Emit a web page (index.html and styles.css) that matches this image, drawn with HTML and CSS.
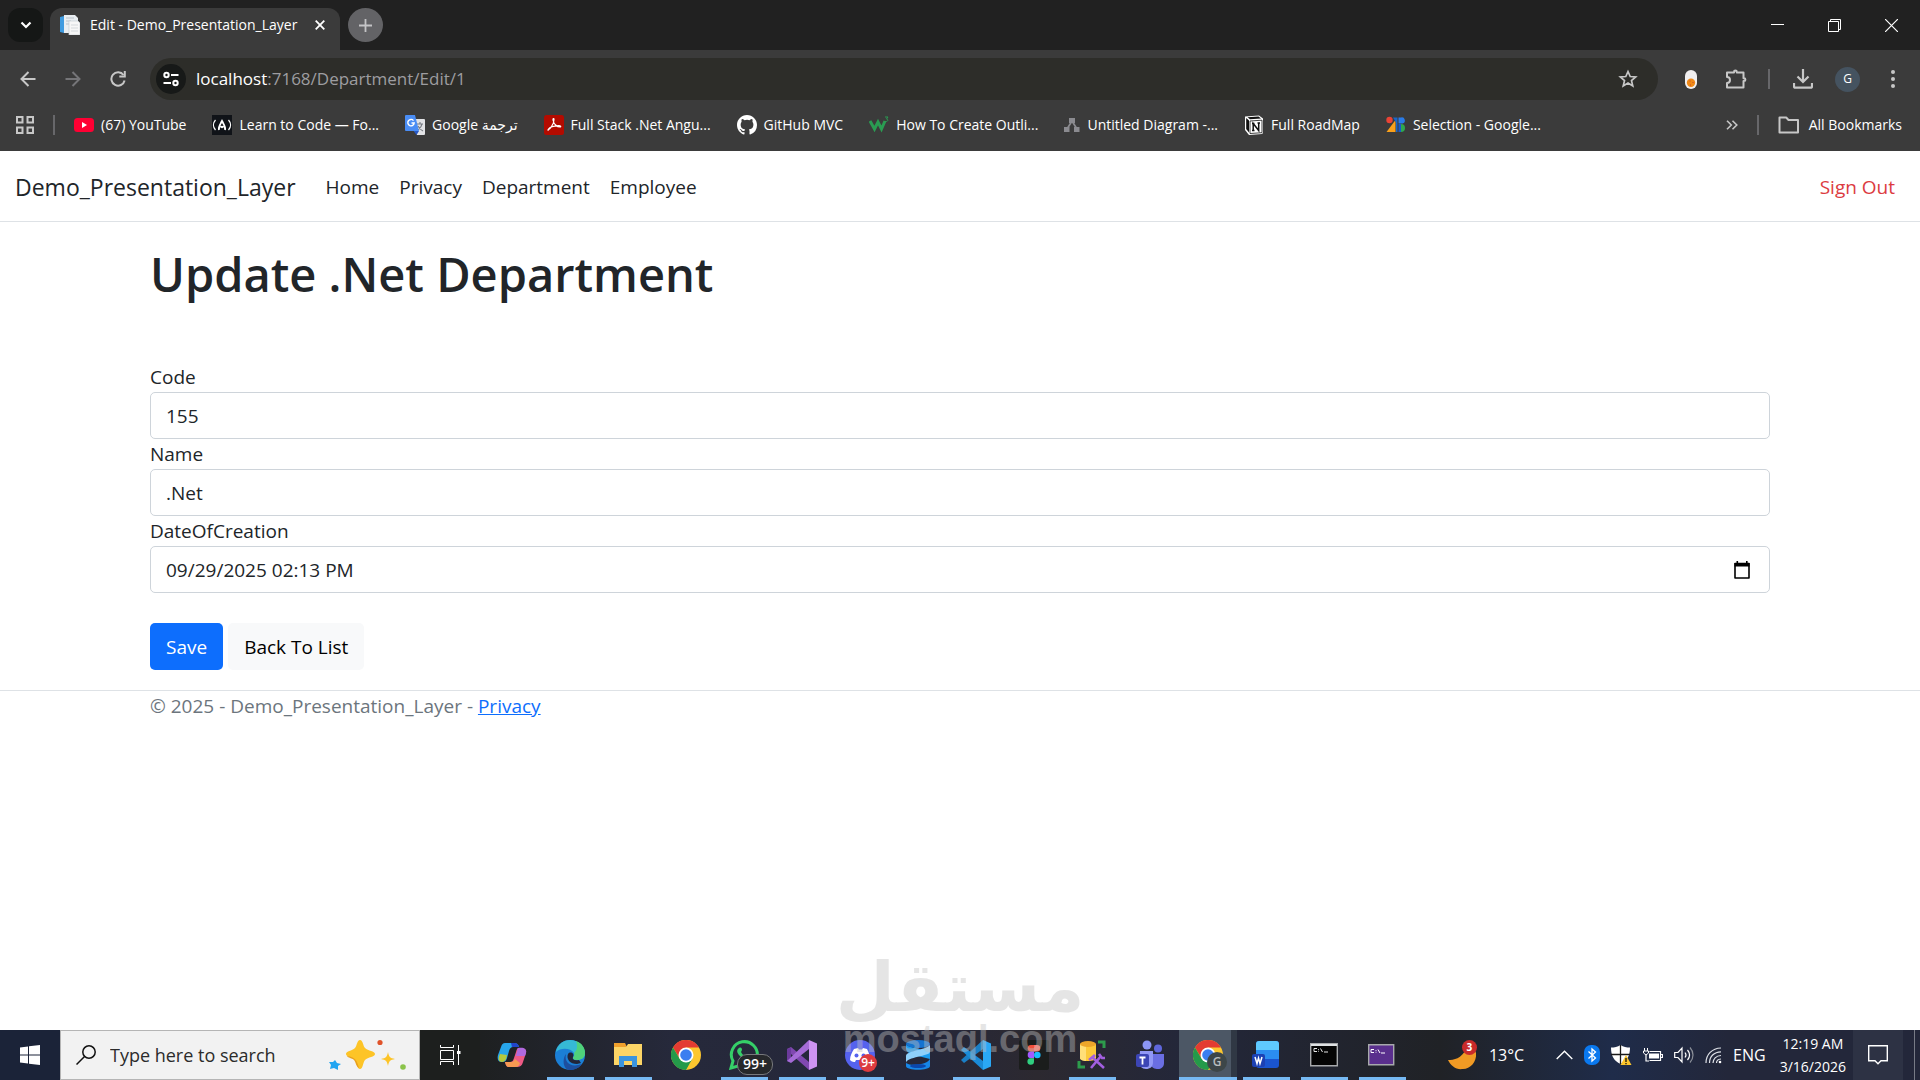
FILE: index.html
```html
<!DOCTYPE html>
<html lang="en">
<head>
  <meta charset="UTF-8" />
  <meta name="viewport" content="width=device-width, initial-scale=1.0" />
  <title>Edit - Demo_Presentation_Layer</title>
  <link rel="stylesheet" href="styles.css">
</head>
<body>
  <!-- Tab strip -->
  <div class="tab-strip">
    <button class="tab-search" aria-label="Search tabs">
      <svg width="12" height="8" viewBox="0 0 12 8"><path d="M1.5 1.5L6 6l4.500-4.500" fill="none" stroke="#fff" stroke-width="2.200"/></svg>
    </button>
    <div class="tab">
      <svg width="20" height="20" viewBox="0 0 20 20"><path d="M0 2l4-1v17l-4-1z" fill="#3f9be0"/><path d="M4 0h11l3 3v15H4z" fill="#e9eef2"/><path d="M6 3h8M6 6h5M6 9h4" stroke="#b9c2ca"/><path d="M9 6h9l2 2v12H9z" fill="#f7f7f7" stroke="#c6cdd2" stroke-width=".7"/><path d="M11 10h7M11 13h7M11 16h7" stroke="#d5d9dc"/></svg>
      <span class="tab-title">Edit - Demo_Presentation_Layer</span>
      <button class="tab-close" aria-label="Close tab">
        <svg width="10" height="10" viewBox="0 0 10 10"><path d="M.7.7l8.600 8.600M9.300.7L.7 9.300" stroke="#fff" stroke-width="1.800"/></svg>
      </button>
    </div>
    <button class="new-tab" aria-label="New tab">
      <svg width="13" height="13" viewBox="0 0 13 13"><path d="M6.500 0v13M0 6.500h13" stroke="#c4c4c6" stroke-width="1.800"/></svg>
    </button>
    <div class="window-buttons">
      <button aria-label="Minimize"><svg width="13" height="13" viewBox="0 0 13 13"><path d="M0 5.500h13" stroke="#fff"/></svg></button>
      <button aria-label="Restore"><svg width="13" height="13" viewBox="0 0 13 13"><path d="M.5 2.500h10v10H.5zM2.500 2.500v-2h10v10h-2" fill="none" stroke="#fff"/></svg></button>
      <button aria-label="Close"><svg width="13" height="13" viewBox="0 0 13 13"><path d="M0 0l13 13M13 0L0 13" stroke="#fff" stroke-width="1.200"/></svg></button>
    </div>
  </div>

  <!-- Toolbar and bookmarks -->
  <div class="browser-bar">
    <div class="toolbar">
      <button class="tool" aria-label="Back"><svg width="16" height="16" viewBox="0 0 16 16"><path d="M15.500 8H2M8.500 1L1.500 8l7 7" fill="none" stroke="#c7c7c7" stroke-width="2"/></svg></button>
      <button class="tool" aria-label="Forward"><svg width="16" height="16" viewBox="0 0 16 16"><path d="M.5 8H14M7.500 1l7 7-7 7" fill="none" stroke="#757578" stroke-width="2"/></svg></button>
      <button class="tool" aria-label="Reload"><svg width="16" height="16" viewBox="0 0 16 16"><path d="M13.500 4A6.700 6.700 0 1 0 14.600 9.500" fill="none" stroke="#c7c7c7" stroke-width="2"/><path d="M15.800 0v6.500H9.300v-2h4.500V0z" fill="#c7c7c7"/></svg></button>
      <div class="omnibox">
        <button class="site-info" aria-label="Site information">
          <svg width="16" height="16" viewBox="0 0 16 16" fill="none" stroke="#fff" stroke-width="2"><circle cx="3.500" cy="4" r="2.200"/><path d="M8 4h7.500M.5 12H8"/><circle cx="12.500" cy="12" r="2.200"/></svg>
        </button>
        <div class="url"><span class="host">localhost</span>:7168/Department/Edit/1</div>
        <button class="star" aria-label="Bookmark this tab"><svg width="20" height="20" viewBox="0 0 20 20"><path d="M10 2.500l2.200 5 5.500.5-4.200 3.600 1.300 5.400L10 14.100 5.200 17l1.300-5.400L2.300 8l5.500-.5z" fill="none" stroke="#c7c7c7" stroke-width="1.700"/></svg></button>
      </div>
      <button class="tool" aria-label="Extension"><svg width="12" height="19" viewBox="0 0 12 19"><rect width="12" height="19" rx="6" fill="#f1eff0"/><circle cx="6" cy="12.800" r="4.200" fill="#f08a18"/><path d="M5 10.500v1M8 12v1M5.500 14.500v1" stroke="#c6452c"/></svg></button>
      <button class="tool" aria-label="Extensions"><svg width="22" height="22" viewBox="0 0 22 22"><path d="M2 4.500h7v-.6a1.400 1.400 0 0 1 2.800 0v.6h6.700v5.800h.5a1.400 1.400 0 0 1 0 2.800h-.5v6.400H2V15a3 3 0 0 0 0-6z" fill="none" stroke="#c7c7c7" stroke-width="2" stroke-linejoin="round"/></svg></button>
      <span class="divider"></span>
      <button class="tool" aria-label="Downloads"><svg width="20" height="20" viewBox="0 0 20 20"><path d="M10 0v12M4.500 7.500l5.500 5.500 5.500-5.500M1 14v3.500a1.200 1.200 0 0 0 1.200 1.200h15.600A1.200 1.200 0 0 0 19 17.500V14" fill="none" stroke="#c7c7c7" stroke-width="2.200"/></svg></button>
      <button class="profile" aria-label="Profile">G</button>
      <button class="tool" aria-label="Menu"><svg width="4" height="18" viewBox="0 0 4 18" fill="#c7c7c7"><circle cx="2" cy="2" r="2"/><circle cx="2" cy="9" r="2"/><circle cx="2" cy="16" r="2"/></svg></button>
    </div>

    <div class="bookmarks">
      <button class="apps" aria-label="Apps"><svg width="18" height="18" viewBox="0 0 18 18"><path d="M1 1h5.500v5.500H1zM11.500 1H17v5.500h-5.500zM1 11.500h5.500V17H1zM11.500 11.500H17V17h-5.500z" fill="none" stroke="#c7c7c7" stroke-width="2"/></svg></button>
      <span class="divider"></span>
      <a href="#"><svg width="20" height="20" viewBox="0 0 20 20"><rect y="3" width="20" height="14" rx="3.500" fill="#f03"/><path d="M8 7l5 3-5 3z" fill="#fff"/></svg>(67) YouTube</a>
      <a href="#"><svg width="20" height="20" viewBox="0 0 20 20"><path d="M0 0h20v20H0z" fill="#101318"/><path d="M3.500 5C.8 8 .8 12 3.500 15M16.500 5c2.700 3 2.700 7 0 10" fill="none" stroke="#fff" stroke-width="1.300"/><path d="M7 15c-1-3 1-5 3-9 2 4 4 6 3 9M8.500 12.500c1-1 2-1 3 0" fill="none" stroke="#fff" stroke-width="1.800"/></svg>Learn to Code — Fo...</a>
      <a href="#"><svg width="20" height="20" viewBox="0 0 20 20"><path d="M8 4h11a1 1 0 0 1 1 1v14a1 1 0 0 1-1 1h-7z" fill="#e2e3e6"/><path d="M12 9h6M15 7v2M17 9c-1 4-3 5-4 6M13 11c1 2 3 4 5 5" fill="none" stroke="#777b82" stroke-width="1.100"/><path d="M1 0h9l4 16H1a1 1 0 0 1-1-1V1a1 1 0 0 1 1-1z" fill="#4a8df5"/><path d="M8.600 16H14l-2.500 4z" fill="#2758c4"/><path d="M8.500 5.600A3.200 3.200 0 1 0 9.200 8H6.500" fill="none" stroke="#fff" stroke-width="1.400"/></svg>Google ترجمة</a>
      <a href="#"><svg width="20" height="20" viewBox="0 0 20 20"><rect width="20" height="20" rx="2.500" fill="#b30b00"/><path d="M4 15c2-1 6-6 6-10.500 0-1.500-1.300-1-1 .5.600 4 4 7 7 7 1.500-.2.500-1.500-1.500-1.300C11 11 6 12 4.500 14c-.7 1 .2 1.500-.5 1z" fill="none" stroke="#fff" stroke-width="1.200"/></svg>Full Stack .Net Angu...</a>
      <a href="#"><svg width="20" height="20" viewBox="0 0 16 16"><path fill="#fff" d="M8 0C3.580 0 0 3.580 0 8c0 3.540 2.290 6.530 5.470 7.590.4.070.55-.17.55-.38 0-.19-.01-.82-.01-1.490-2.010.37-2.530-.49-2.690-.94-.09-.23-.48-.94-.82-1.130-.28-.15-.68-.52-.01-.53.63-.01 1.080.58 1.230.82.72 1.210 1.870.87 2.330.66.070-.52.28-.87.51-1.070-1.780-.2-3.640-.89-3.640-3.950 0-.87.31-1.590.82-2.150-.08-.2-.36-1.020.08-2.120 0 0 .67-.21 2.200.82a7.600 7.600 0 0 1 4 0c1.530-1.040 2.200-.82 2.200-.82.44 1.100.16 1.920.08 2.120.51.560.82 1.270.82 2.150 0 3.070-1.870 3.750-3.650 3.950.29.250.54.730.54 1.480 0 1.070-.01 1.930-.01 2.200 0 .21.150.46.550.38A8 8 0 0 0 16 8c0-4.420-3.580-8-8-8z"/></svg>GitHub MVC</a>
      <a href="#"><svg width="20" height="20" viewBox="0 0 20 20" fill="none" stroke="#2a9c52"><path d="M1 6l4.500 8L9 7l3.500 7L16 6" stroke-width="3"/><path d="M16 2h3l-1.500 2c2 0 2 3-1.500 2.500" stroke-width="1"/></svg>How To Create Outli...</a>
      <a href="#"><svg width="16" height="16" viewBox="0 0 16 16"><path d="M8 4L3 12M8 4l5 8" stroke="#8b8b90" stroke-width="1.700"/><path d="M5 1h6v5H5zM0 10h5.500v5H0zM10 10h5.500v5H10z" fill="#8b8b90"/></svg>Untitled Diagram -...</a>
      <a href="#"><svg width="20" height="20" viewBox="0 0 20 20"><path d="M1 1.500L15 .5l4 3V18l-1 1-13 1-4-5z" fill="#fff"/><path d="M2.200 3l2.800 2.500v12L2.200 14z" fill="#111"/><path d="M3.500 2.200L14.500 1.500l2.500 2-11 .8z" fill="#111"/><path d="M6 6l12-.8v12.500L6 18.500z" fill="#fff" stroke="#111" stroke-width=".8"/><path d="M9.200 15.500V8.500l5.500 7V8M8 8.600h2.500M13.500 8H16M8 15.600h2.500" fill="none" stroke="#111" stroke-width="1.500"/></svg>Full RoadMap</a>
      <a href="#"><svg width="20" height="20" viewBox="0 0 20 20"><circle cx="3.500" cy="5" r="3.200" fill="#ea4335"/><path d="M9.500 5v12H.5z" fill="#f9a01b"/><path d="M7 2.500h4.500V17H10V7.500z" fill="#1a67c9"/><path d="M12.500 2.500H15a3 3 0 0 1 1.500 6h-4z" fill="#2a7be8"/><path d="M12.500 9H15v8h-2.500z" fill="#1b58c9"/><path d="M15 9a4 4 0 0 1 0 8z" fill="#2fa84f"/></svg>Selection - Google...</a>
      <button class="more" aria-label="More bookmarks"><svg width="12" height="10" viewBox="0 0 12 10"><path d="M1 .7L5.300 5 1 9.300M6.500.7L10.800 5 6.500 9.300" fill="none" stroke="#c7c7c7" stroke-width="1.600"/></svg></button>
      <span class="divider"></span>
      <a href="#" class="all"><svg width="22" height="18" viewBox="0 0 22 18"><path d="M1.500 1.500h6.700L10.500 4H20v12.500H1.500z" fill="none" stroke="#c7c7c7" stroke-width="2" stroke-linejoin="round"/></svg>All Bookmarks</a>
    </div>
  </div>

  <!-- Site -->
  <header class="navbar">
    <a class="brand" href="#">Demo_Presentation_Layer</a>
    <nav>
      <a href="#">Home</a>
      <a href="#">Privacy</a>
      <a href="#">Department</a>
      <a href="#">Employee</a>
    </nav>
    <a class="sign-out" href="#">Sign Out</a>
  </header>

  <main class="container">
    <h1>Update .Net Department</h1>
    <form>
      <label for="code">Code</label>
      <input type="text" id="code" value="155" />
      <label for="name">Name</label>
      <input type="text" id="name" value=".Net" />
      <label for="created">DateOfCreation</label>
      <div class="date-field">
        <input type="text" id="created" value="09/29/2025 02:13 PM" />
        <button type="button" class="picker" aria-label="Show date picker">
          <svg width="16" height="18" viewBox="0 0 16 18"><path d="M1 2.500h14V17H1z" fill="none" stroke="#000" stroke-width="1.600" stroke-linejoin="round"/><path d="M.5 2h15v3.500H.5zM2.500 0h1.600v2H2.500zM12 0h1.600v2H12z"/></svg>
        </button>
      </div>
      <div class="actions">
        <button type="button" class="btn btn-primary">Save</button>
        <a href="#" class="btn btn-light">Back To List</a>
      </div>
    </form>
  </main>

  <footer class="footer">
    <div class="container">&copy; 2025 - Demo_Presentation_Layer - <a href="#">Privacy</a></div>
  </footer>

  <!-- Windows taskbar -->
  <div class="taskbar">
    <button class="start" aria-label="Start"><svg width="20" height="20" viewBox="0 0 20 20" fill="#fff"><path d="M0 2.500l8-1.100v8.100H0zM9 1.300L20 0v9.500H9zM0 10.500h8v8l-8-1.100zM9 10.500h11V20L9 18.700z"/></svg></button>
    <div class="search">
      <svg width="20" height="20" viewBox="0 0 20 20" fill="none" stroke="#111" stroke-width="1.500"><circle cx="13" cy="7" r="6.200"/><path d="M8.500 11.500L.5 19.500"/></svg>
      <input type="text" aria-label="Search" placeholder="Type here to search" />
      <svg width="78" height="32" viewBox="0 0 78 32"><path d="M31 1c3 0 3 6 5 8 3 3 10 3 10 6s-7 3-10 6c-2 2-2 9-5 9s-3-7-5-9c-3-3-9-3-9-6s6-3 9-6c2-2 2-8 5-8z" fill="#fdc427"/><path d="M18 17c8 1 10 4 12 12-3-1-3-6-5-8-2-2-6-2-7-4z" fill="#e9a01c"/><path d="M59 13c1 5 2 6 7 7-5 1-6 2-7 7-1-5-2-6-7-7 5-1 6-2 7-7z" fill="#fdc427"/><path d="M6 21l2 3 4 1-3 2 0 4-4-2-4 1 1-4-2-3 4 0z" fill="#22a5f1"/><circle cx="51" cy="3.500" r="2.600" fill="#e0532a"/><circle cx="74" cy="28" r="2.800" fill="#8bc34a"/></svg>
    </div>
    <button class="task-view" aria-label="Task View"><svg width="21" height="20" viewBox="0 0 21 20" fill="none" stroke="#fff"><path d="M.5 5.500h13v9H.5zM.5 0v2.500h13V0M.5 20v-3.500h13V20M18.500 0v20" /><path d="M17 6h3.500v3H17z" fill="#fff" stroke="none"/></svg></button>

    <div class="apps-row">
      <button class="app" aria-label="Copilot"><svg width="30" height="30" viewBox="0 0 30 30"><path d="M8 3h9c3 0 4 1 5 4h-6c-2 0-3 1-4 4l-2 7c-1 3-2 4-5 4-4 0-5-3-4-7l3-8c1-3 2-4 4-4z" fill="#27a5ea"/><path d="M3 14l7 1-1 4c-1 2-2 3-4 3-4 0-4-4-2-8z" fill="#b5c83d"/><path d="M14 3h4c2 0 3 1 4 4h-7z" fill="#2144c9"/><path d="M22 8c5 0 8 1 7 5l-3 9c-1 4-3 5-7 5h-7c-2 0-3-1-4-5h5c2 0 3-1 4-4l2-6c1-3 1-4 3-4z" fill="#ee5a86"/><path d="M21 8c6-1 9 1 8 5l-1 3h-9l1-4c1-3 0-3 1-4z" fill="#b069df"/><path d="M8 22h6c2 0 3-1 4-3l5 4c-1 3-2 4-5 4h-6c-2 0-3-1-4-5z" fill="#f79a52"/></svg></button>
      <button class="app open" aria-label="Edge"><svg width="30" height="30" viewBox="0 0 30 30"><circle cx="15" cy="15" r="15" fill="#1b7fd6"/><path d="M1 12C2 4 9 0 15 0c9 0 15 7 15 13 0 5-4 7-8 7-3 0-4-1-4-2s2-2 1-5c-3-5-13-6-18-1z" fill="#36b9d5"/><path d="M21 1c6 2 9 7 9 12 0 5-4 7-8 7-3 0-4-1-4-2s2-2 1-5c3-2 4-7 2-12z" fill="#4fd17a"/><path d="M11 14c-2 9 5 14 16 10-3 4-8 6-12 6C8 30 7 19 11 14z" fill="#1d4f9f"/><path d="M13 14c-2 5 2 10 9 10l4-1-2-3c-5 1-7-1-6-3 2-4-3-6-5-3z" fill="#22263a"/></svg></button>
      <button class="app open" aria-label="File Explorer"><svg width="28" height="24" viewBox="0 0 28 24"><path d="M0 0h11l2 4H0z" fill="#f0a02c"/><path d="M0 4h12l2-3h14v21H0z" fill="#fcd566"/><path d="M5 24V13h18v11h-5v-6h-8v6z" fill="#3a94df"/></svg></button>
      <button class="app" aria-label="Chrome"><svg width="30" height="30" viewBox="0 0 30 30"><circle cx="15" cy="15" r="15" fill="#fdc72f"/><path d="M2 7.500A15 15 0 0 1 28 7.500H15L9 19z" fill="#e33b32"/><path d="M2 7.500A15 15 0 0 0 15 30l6.500-11.500H8.500z" fill="#249a4a"/><circle cx="15" cy="15" r="7.500" fill="#fff"/><circle cx="15" cy="15" r="5.800" fill="#3b7ef0"/></svg></button>
      <button class="app open" aria-label="WhatsApp"><svg width="30" height="30" viewBox="0 0 30 30"><path d="M2 28l2-7a13 13 0 1 1 5 5z" fill="none" stroke="#35cf68" stroke-width="3"/><path d="M10 8c2-1 3 0 3 2l-1 2c1 2 3 4 5 5l2-2c2 1 4 2 2 4-3 3-7 1-10-3-3-3-4-6-1-8z" fill="#35cf68"/></svg><span class="badge badge-wide">99+</span></button>
      <button class="app open" aria-label="Visual Studio"><svg width="30" height="30" viewBox="0 0 30 30"><path d="M0 9l4-2 18 15v8L4 14z" fill="#8048b0"/><path d="M0 9l4-1v14l-4-1z" fill="#6b3a9c"/><path d="M0 21l22-21v9L4 23z" fill="#a56bd6"/><path d="M22 0l8 3.500v23L22 30z" fill="#cd93f2"/></svg></button>
      <button class="app open" aria-label="Discord"><svg width="30" height="30" viewBox="0 0 30 30"><circle cx="15" cy="15" r="15" fill="#5562ee"/><path d="M9 9l4-1 1 1.500h3L18 8l4 1c2 4 3 7 3 11-2 2-4 2-5 2l-1-2h-8l-1 2c-1 0-3 0-5-2 0-4 2-8 4-11z" fill="#fff"/><circle cx="11.500" cy="15.500" r="2" fill="#5562ee"/><circle cx="18.500" cy="15.500" r="2" fill="#5562ee"/></svg><span class="badge badge-red">9+</span></button>
      <button class="app" aria-label="Azure Data Studio"><svg width="24" height="30" viewBox="0 0 24 30"><path d="M0 4v5c0 3 4 5 12 7l12 3v-6C22 9 0 8 0 4z" fill="#1c9cf0"/><path d="M24 4v8c0 4-24 5-24 11v-7c0-6 24-6 24-12z" fill="#8fd0fb"/><path d="M24 18v8c0 5-24 5-24 0v-3c6 4 24 1 24-5z" fill="#1686e8"/><ellipse cx="12" cy="4" rx="12" ry="4" fill="#1573d1"/><ellipse cx="12" cy="26" rx="8" ry="2" fill="#0c47ac"/></svg></button>
      <button class="app open" aria-label="Visual Studio Code"><svg width="30" height="30" viewBox="0 0 30 30"><path d="M22 0v9L3 23l-3-3z" fill="#1a7fc6"/><path d="M0 10l3-3 19 14v9z" fill="#1a8bd8"/><path d="M22 0l8 3.500v23L22 30z" fill="#2aa8f5"/></svg></button>
      <button class="app" aria-label="Figma"><svg width="30" height="30" viewBox="0 0 30 30"><rect width="30" height="30" rx="2" fill="#1b1d1c"/><path d="M15 5h-3a3.300 3.300 0 0 0 0 6.600h3z" fill="#f0503c"/><path d="M15 5h3a3.300 3.300 0 0 1 0 6.600h-3z" fill="#ff7262"/><path d="M15 11.600h-3a3.300 3.300 0 0 0 0 6.600h3z" fill="#a259ff"/><circle cx="18.300" cy="15" r="3.300" fill="#1abcfe"/><path d="M15 18.200h-3a3.300 3.300 0 1 0 3 3.300z" fill="#2fd07f"/></svg></button>
      <button class="app open" aria-label="SQL Server Management Studio"><svg width="30" height="30" viewBox="0 0 30 30"><path d="M3 4v14c0 4 16 4 16 0V4z" fill="#fcc93a"/><path d="M3 4v14c0 2 3 3 6 3V4z" fill="#ffdf78"/><ellipse cx="11" cy="4" rx="8" ry="3" fill="#eda62a"/><path d="M21 2h6v6M2 21v6h6" fill="none" stroke="#2d9c4c" stroke-width="3"/><path d="M14 28l10-12M27 28L15 17" stroke="#a25fe0" stroke-width="2.600"/><path d="M12 20l6-5M22 14l3 4h3" fill="none" stroke="#a25fe0" stroke-width="2.600"/></svg></button>
      <button class="app" aria-label="Teams"><svg width="30" height="30" viewBox="0 0 30 30"><circle cx="12" cy="5" r="4.500" fill="#8c96f5"/><circle cx="23" cy="8.500" r="4" fill="#5f67dc"/><path d="M16 14h13v9c0 4-3 6-6 6s-7-1-7-5z" fill="#6a6ee2"/><path d="M5 11h13v11c0 5-3 7-7 7s-7-3-7-7z" fill="#9298f5"/><rect x="1" y="14" width="13" height="13" rx="2" fill="#3c45b5"/><path d="M4.500 17.500h6M7.500 17.500v7" stroke="#fff" stroke-width="1.800"/></svg></button>
      <button class="app active" aria-label="Chrome window"><svg width="30" height="30" viewBox="0 0 30 30"><circle cx="15" cy="15" r="15" fill="#fdc72f"/><path d="M2 7.500A15 15 0 0 1 28 7.500H15L9 19z" fill="#e33b32"/><path d="M2 7.500A15 15 0 0 0 15 30l6.500-11.500H8.500z" fill="#249a4a"/><circle cx="15" cy="15" r="7.500" fill="#fff"/><circle cx="15" cy="15" r="5.800" fill="#3b7ef0"/></svg><span class="badge badge-dark">G</span></button>
      <button class="app open" aria-label="Word"><svg width="28" height="28" viewBox="0 0 28 28"><rect x="4" width="23" height="27" rx="3" fill="#1a55d0"/><path d="M4 9h23v9H4z" fill="#2b8df0"/><path d="M7 0h17a3 3 0 0 1 3 3v6H4V3a3 3 0 0 1 3-3z" fill="#5fcaff"/><rect y="13" width="13" height="13" rx="2" fill="#1c41b4"/><path d="M3 16l2 6.500L6.500 17 8 22.500 10 16" fill="none" stroke="#fff" stroke-width="1.500"/></svg></button>
      <button class="app open" aria-label="Command Prompt"><svg width="28" height="24" viewBox="0 0 28 24"><path d="M.7.700h26.600v22H.7z" fill="#050505" stroke="#a7a9ac" stroke-width="1.400"/><path d="M1 1h26v2H1z" fill="#dfe1e3"/><path d="M7 5.500H4v3h3M8.500 6v.8M8.500 7.800v.8M10.500 5.500l2 3.500M14 9h4" fill="none" stroke="#e6e6e6"/></svg></button>
      <button class="app open" aria-label="Developer Prompt"><svg width="28" height="22" viewBox="0 0 28 22"><path d="M.7.700h25v20H.7z" fill="#5a2f8d" stroke="#a7a9ac" stroke-width="1.400"/><path d="M6 5.500H3v3h3M8 6v.8M8 7.800v.8M10 5.500l2 3.500M13 9h4" fill="none" stroke="#fff"/></svg></button>
    </div>

    <div class="tray">
      <button class="weather" aria-label="Weather">
        <svg width="30" height="30" viewBox="0 0 30 30"><path d="M0 20c6 0 13-1 19-12 4-2 8 1 9 5 1 9-6 16-13 16-7 1-12-3-15-9z" fill="#f09a24"/><circle cx="21.500" cy="7.500" r="7.500" fill="#c92a2a"/></svg>
        <span class="weather-count">3</span>
        <span>13°C</span>
      </button>
      <button aria-label="Show hidden icons"><svg width="17" height="10" viewBox="0 0 17 10"><path d="M.7 9l7.800-7.800L16.300 9" fill="none" stroke="#fff" stroke-width="1.400"/></svg></button>
      <button aria-label="Bluetooth"><svg width="16" height="20" viewBox="0 0 16 20"><rect width="16" height="20" rx="7" fill="#0a78ee"/><path d="M4.500 6.500l7 6.500L8 16V4l3.500 3-7 6.500" fill="none" stroke="#fff" stroke-width="1.300"/></svg></button>
      <button aria-label="Security"><svg width="21" height="20" viewBox="0 0 21 20"><path d="M9.500 0c3 2 6 2.500 9.500 2.500C19 11 16 16 9.500 19 3 16 0 11 0 2.500 3.500 2.500 6.500 2 9.500 0z" fill="#fff"/><path d="M9.500 0v19M0 9.500h19" stroke="#1a1a1a" stroke-width="1.300"/><path d="M15 10l5.500 10h-11z" fill="#fbc52c"/><path d="M15 13v4M15 18v1.200" stroke="#111" stroke-width="1.300"/></svg></button>
      <button aria-label="Battery"><svg width="20" height="15" viewBox="0 0 20 15"><path d="M6.500 3.500h11v9h-11M17.500 6.500h2v3h-2M3 7v6h3" fill="none" stroke="#fff" stroke-width="1.200"/><path d="M6 5.500h10v5H6z" fill="#fff"/><path d="M1.500 0v3M4.500 0v3M.5 3h5v2L3 7 .5 5z" fill="none" stroke="#fff"/></svg></button>
      <button aria-label="Volume"><svg width="20" height="18" viewBox="0 0 20 18" fill="none" stroke="#fff" stroke-width="1.200"><path d="M.7 6.500H4L8 2v14l-4-4.500H.7zM11 6.500c1.200 1.500 1.200 3.500 0 5M13.500 4c2.500 3 2.500 7 0 10"/><path d="M16 1.500c4 4.500 4 10.500 0 15" stroke="#8b8f98"/></svg></button>
      <button aria-label="Network"><svg width="17" height="17" viewBox="0 0 17 17" fill="none" stroke="#dfe2e8" stroke-width="1.200"><path d="M1 16C1 7.500 7 1.200 16 1M4.500 16C4.500 9.500 9 5 16 4.800M8 16c0-4 3-7.300 8-7.500M11.500 16c0-2 1.500-3.800 4.500-4"/><circle cx="15" cy="15" r="1.300" fill="#fff" stroke="none"/></svg></button>
      <button>ENG</button>
      <button class="clock">12:19 AM<br>3/16/2026</button>
      <button class="notify" aria-label="Notifications"><svg width="20" height="20" viewBox="0 0 20 20"><path d="M.7.700h18.600v15H13l-3 3-3-3H.7z" fill="none" stroke="#fff" stroke-width="1.400"/></svg></button>
      <button class="show-desktop" aria-label="Show desktop"></button>
    </div>
  </div>

  <!-- Watermark over the page and the taskbar -->
  <div class="watermark">
    <div class="mark-ar" lang="ar" dir="rtl">مستقل</div>
    <div class="mark-en">mostaql.com</div>
  </div>
</body>
</html>
```
FILE: styles.css
```css
* {
  box-sizing: border-box;
}

body {
  margin: 0;
  min-height: 100vh;
  display: flex;
  flex-direction: column;
  position: relative;
  background-color: #fff;
  color: #212529;
  font-family: "Open Sans", "Noto Sans", "DejaVu Sans", sans-serif;
  font-size: 19px;
  line-height: 30px;
}

button {
  display: flex;
  align-items: center;
  justify-content: center;
  padding: 0;
  border: none;
  background: none;
  color: inherit;
  font: inherit;
  cursor: pointer;
}

svg {
  display: block;
  flex: none;
}

/* tab strip */
.tab-strip {
  display: flex;
  height: 50px;
  padding: 8px 0 0 8px;
  background-color: #212121;
  color: #fff;
  font-size: 14px;
}

.tab-search {
  width: 35px;
  height: 34px;
  border-radius: 12px;
  background-color: #151716;
}

.tab {
  display: flex;
  align-items: center;
  width: 290px;
  margin-left: 7px;
  padding: 0 15px 8px 10px;
  border-radius: 12px 12px 0 0;
  background-color: #3b3b3b;
}

.tab-title {
  flex: 1;
  margin-left: 10px;
  white-space: nowrap;
}

.new-tab {
  width: 35px;
  height: 34px;
  margin-left: 8px;
  border-radius: 50%;
  background-color: #636366;
}

.window-buttons {
  display: flex;
  margin-left: auto;
}

.window-buttons button {
  width: 57px;
  height: 34px;
}

/* toolbar */
.browser-bar {
  background-color: #3b3b3b;
  color: #fff;
  font-size: 14px;
}

.toolbar {
  display: flex;
  align-items: center;
  height: 58px;
  padding: 0 5px;
}

.tool {
  width: 45px;
  height: 40px;
}

.omnibox {
  display: flex;
  flex: 1;
  align-items: center;
  height: 42px;
  margin: 0 10px;
  padding: 0 20px 0 6px;
  border-radius: 21px;
  background-color: #2d2d29;
  color: #9d9da0;
  font-size: 17px;
}

.site-info {
  width: 30px;
  height: 30px;
  border-radius: 50%;
  background-color: #171918;
}

.url {
  flex: 1;
  margin-left: 10px;
}

.host {
  color: #fff;
}

.divider {
  width: 2px;
  height: 20px;
  margin: 0 10px;
  background-color: #67676a;
}

.profile {
  width: 25px;
  height: 25px;
  margin: 0 10px;
  border-radius: 50%;
  background-color: #455360;
  font-size: 12px;
}

/* bookmarks bar */
.bookmarks {
  display: flex;
  align-items: center;
  height: 43px;
  padding: 0 18px 10px 16px;
  white-space: nowrap;
}

.bookmarks a {
  display: flex;
  align-items: center;
  gap: 7px;
  margin-right: 26px;
  color: #fff;
  text-decoration: none;
}

.bookmarks .divider {
  margin: 0 19px;
}

.bookmarks .more {
  margin-left: auto;
}

.bookmarks .all {
  gap: 9px;
  margin-right: 0;
}

/* site header */
.navbar {
  display: flex;
  align-items: center;
  height: 71px;
  padding: 2px 25px 0 15px;
  border-bottom: 1px solid #dee2e6;
}

.navbar a {
  color: #212529;
  text-decoration: none;
}

.navbar .brand {
  margin-right: 30px;
  font-size: 23px;
}

.navbar nav {
  display: flex;
  gap: 20px;
}

.navbar .sign-out {
  margin-left: auto;
  color: #dc3b41;
}

/* form */
.container {
  width: 100%;
  max-width: 1650px;
  margin: 0 auto;
  padding: 0 15px;
}

h1 {
  margin: 22px 0 58px;
  font-size: 47px;
  font-weight: 600;
  line-height: 60px;
}

form label {
  display: block;
}

form input {
  display: block;
  width: 100%;
  height: 47px;
  padding: 0 15px;
  border: 1px solid #ced4da;
  border-radius: 5px;
  background-color: #fff;
  color: #212529;
  font: inherit;
}

.date-field {
  position: relative;
}

.picker {
  position: absolute;
  top: 0;
  right: 10px;
  width: 36px;
  height: 47px;
}

.actions {
  display: flex;
  gap: 5px;
  margin: 30px 0 20px;
}

.btn {
  display: flex;
  align-items: center;
  height: 47px;
  padding: 0 16px;
  border-radius: 5px;
  text-decoration: none;
}

.btn-primary {
  background-color: #0d6efd;
  color: #fff;
}

.btn-light {
  background-color: #f8f9fa;
  color: #000;
}

.footer {
  flex: 1;
  border-top: 1px solid #dee2e6;
  color: #6c757d;
}

.footer a {
  color: #0d6efd;
}

/* taskbar */
.taskbar {
  display: flex;
  height: 50px;
  background: linear-gradient(90deg, #1b2236 0, #1d1f1e 24%, #26293b 35%, #25273a 48%, #2c2930 54%, #23273a 62%, #202226 75%, #1f2c4a 84%, #23273a 90%, #23273a 100%);
  color: #fff;
  font-size: 16px;
}

.start {
  width: 60px;
  background-color: #1b2338;
}

.search {
  display: flex;
  align-items: center;
  width: 360px;
  padding: 0 12px 0 15px;
  border: 1px solid #b5b5b5;
  background-color: #f2f2f2;
}

.search input {
  flex: 1;
  width: 0;
  padding: 0 14px;
  border: none;
  background: none;
  font: inherit;
  font-size: 18px;
}

.search input::placeholder {
  color: #2b2b2b;
}

.task-view {
  width: 60px;
  background-color: #1d1f1e;
}

.apps-row {
  display: flex;
  margin-left: 3px;
}

.app {
  position: relative;
  width: 58px;
}

.open::after,
.active::after {
  content: "";
  position: absolute;
  bottom: 0;
  left: 6px;
  right: 5px;
  height: 3px;
  background-color: #76b9f3;
}

.active {
  background: linear-gradient(90deg, #4c5765 52px, #303844 52px);
}

.active::after {
  left: 0;
  right: 0;
}

.badge {
  position: absolute;
  right: 10px;
  bottom: 8px;
  height: 18px;
  border-radius: 10px;
  font-size: 12px;
  font-weight: 600;
  line-height: 18px;
  text-align: center;
}

.badge-wide {
  right: 0;
  bottom: 5px;
  width: 36px;
  height: 21px;
  border: 1px solid #77797c;
  background-color: #26282b;
  font-size: 14px;
}

.badge-red {
  right: 12px;
  width: 18px;
  background-color: #dd3b3f;
}

.badge-dark {
  width: 20px;
  height: 20px;
  background-color: #3d4648;
  color: #b9bdbd;
  line-height: 20px;
}

/* system tray */
.tray {
  display: flex;
  gap: 11px;
  margin-left: auto;
}

.weather {
  position: relative;
  gap: 11px;
  margin-right: 21px;
}

.weather-count {
  position: absolute;
  top: 10px;
  left: 14px;
  width: 15px;
  font-size: 10px;
  font-weight: 700;
  line-height: 15px;
}

.clock {
  margin-left: 3px;
  font-size: 14px;
  line-height: 23px;
  text-align: center;
}

.notify {
  width: 50px;
  margin-left: -4px;
  background-color: #2d3244;
}

.show-desktop {
  width: 6px;
  border-left: 1px solid #777b86;
}

/* watermark */
.watermark {
  position: absolute;
  right: 0;
  bottom: 21px;
  left: 0;
  opacity: 0.41;
  color: #c2c2c2;
  text-align: center;
  pointer-events: none;
}

.mark-ar {
  font-family: "DejaVu Sans", sans-serif;
  font-size: 68px;
  font-weight: 700;
  line-height: 62px;
}

.mark-en {
  font-family: "Liberation Sans", sans-serif;
  font-size: 38px;
  font-weight: 700;
  line-height: 40px;
}
```
